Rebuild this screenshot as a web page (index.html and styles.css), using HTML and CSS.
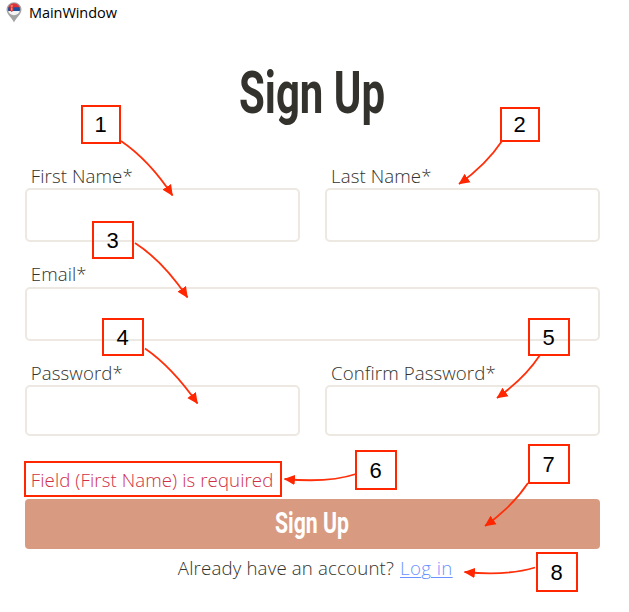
FILE: index.html
```html
<!DOCTYPE html>
<html lang="en">
<head>
<meta charset="utf-8">
<title>MainWindow</title>
<link rel="stylesheet" href="styles.css">
</head>
<body>
<header class="titlebar">
  <svg class="pin" width="16" height="21" viewBox="0 0 16 21">
    <defs><clipPath id="flag"><circle cx="8" cy="7.300" r="6"/></clipPath></defs>
    <path d="M8 20.500C6.500 16.500.5 12.500.5 7.600a7.500 7.300 0 0 1 15 0C15.500 12.500 9.500 16.500 8 20.500Z" fill="#a3a3a3"/>
    <g clip-path="url(#flag)">
      <path d="M0 0h16v6H0z" fill="#e0303a"/>
      <path d="M0 5.300h16v4H0z" fill="#1f4f9c"/>
      <path d="M0 9h16v5H0z" fill="#f4f4f4"/>
      <path d="M4 4.500h3.500v4L5.700 10 4 8.500z" fill="#cf2c35"/>
      <path d="M4.800 3.500h2v1h-2zM5.300 5.500h1v3h-1z" fill="#f0cf8a"/>
    </g>
  </svg>
  <span class="window-name">MainWindow</span>
</header>
<main class="form">
  <h1 class="heading">
    <svg width="150" height="80"><text class="title-text" x="2" y="51.500" textLength="146" lengthAdjust="spacingAndGlyphs">Sign Up</text></svg>
  </h1>
  <div class="row">
    <label class="field"><span>First Name*</span><input type="text"></label>
    <label class="field"><span>Last Name*</span><input type="text"></label>
  </div>
  <div class="row row-email">
    <label class="field"><span>Email*</span><input type="text"></label>
  </div>
  <div class="row row-short">
    <label class="field"><span>Password*</span><input type="password"></label>
    <label class="field"><span>Confirm Password*</span><input type="password"></label>
  </div>
  <p class="error">Field (First Name) is required</p>
  <button class="submit" type="button">
    <svg width="90" height="44"><text class="submit-text" x="8" y="29" textLength="74" lengthAdjust="spacingAndGlyphs">Sign Up</text></svg>
  </button>
  <p class="login">Already have an account? <a href="#">Log in</a></p>
</main>
<svg class="annotations" width="629" height="612" viewBox="0 0 629 612">
  <defs>
    <marker id="tip" viewBox="0 0 10 10" refX="9.500" refY="5" markerWidth="11" markerHeight="11" markerUnits="userSpaceOnUse" orient="auto"><path d="M0 0.300 10 5 0 9.700Z"/></marker>
  </defs>
  <g class="boxes">
    <rect x="82" y="106" width="38" height="37"/>
    <rect x="501" y="108" width="38" height="33"/>
    <rect x="93" y="222" width="40" height="36"/>
    <rect x="103" y="319" width="40" height="36"/>
    <rect x="529" y="319" width="40" height="36"/>
    <rect x="356" y="451" width="40" height="38"/>
    <rect x="529" y="445" width="40" height="38"/>
    <rect x="537" y="553" width="40" height="38"/>
    <rect x="25" y="462" width="256" height="34"/>
  </g>
  <g class="arrows">
    <path d="M121 141Q149 160 172.500 195.500"/>
    <path d="M502 141Q486 165 459 184"/>
    <path d="M135 243Q163 261 187.500 297.500"/>
    <path d="M145 348.500Q172 367 197.500 403.500"/>
    <path d="M540 355Q525 378 497 398"/>
    <path d="M356 474Q329 483 284.500 479"/>
    <path d="M528 483Q512 507 485 526"/>
    <path d="M535 567.500Q507 576 464.500 572"/>
  </g>
  <g class="digits">
    <text x="100.500" y="132">1</text>
    <text x="519.500" y="132">2</text>
    <text x="112.500" y="248">3</text>
    <text x="122.500" y="345">4</text>
    <text x="548.500" y="345">5</text>
    <text x="375.500" y="478">6</text>
    <text x="548.500" y="472">7</text>
    <text x="556.500" y="580">8</text>
  </g>
</svg>
</body>
</html>
```

FILE: styles.css
```css
* { box-sizing: border-box; }

body {
  margin: 0;
  height: 612px;
  overflow: hidden;
  position: relative;
  background: #fff;
  color: #33322c;
  font: 300 18.67px/25px "Open Sans", sans-serif;
  letter-spacing: 0.09px;
}

.titlebar {
  display: flex;
  align-items: flex-start;
  height: 28px;
  padding: 2px 0 0 6px;
  gap: 7px;
}

.pin { flex: none; }

.window-name {
  font: 400 14.5px/21px "Open Sans", sans-serif;
  letter-spacing: -0.06px;
  color: #000;
}

.form {
  display: flex;
  flex-direction: column;
  padding: 0 29px 0 24.5px;
}

.heading {
  display: flex;
  justify-content: center;
  height: 135px;
  margin: 0;
  padding-top: 33px;
  letter-spacing: 0;
}

.heading svg { overflow: visible; }

.title-text {
  font: 700 59px "Roboto", sans-serif;
  fill: #33322c;
}

.row {
  display: flex;
  gap: 25px;
  margin-bottom: 20px;
}

.field {
  display: flex;
  flex: 1;
  flex-direction: column;
}

.field span {
  height: 25px;
  padding-left: 6.3px;
}

.field input {
  width: 100%;
  height: 54px;
  border: 2px solid #ede8e2;
  border-radius: 5px;
  background: #fff;
}

.row-email { margin-bottom: 19px; }
.row-email span { line-height: 23px; }

.row-short { margin-bottom: 31px; }

.row-short .field input { height: 51px; }

.error {
  height: 32px;
  margin: 0;
  padding-left: 6.3px;
  color: #d02f46;
}

.submit {
  display: flex;
  justify-content: center;
  height: 50px;
  padding: 5px 0 0;
  border: 0;
  border-radius: 4px;
  background: #d89b82;
}

.submit svg { flex: none; overflow: visible; }

.submit-text {
  font: 700 29px "Roboto", sans-serif;
  fill: #fff;
  letter-spacing: 0;
}

.login {
  margin: 6px 0 0;
  padding-left: 6px;
  text-align: center;
  letter-spacing: 0.16px;
}

.login a {
  margin-left: 1px;
  color: #6b93ff;
  letter-spacing: 0.4px;
  text-decoration-thickness: 1px;
  text-underline-offset: 2px;
}

.annotations {
  position: absolute;
  inset: 0;
  pointer-events: none;
  letter-spacing: 0;
}

.boxes { fill: none; stroke: #ff2600; stroke-width: 2; }
.arrows { fill: none; stroke: #ff2f0a; stroke-width: 1.8; }
.arrows path { marker-end: url(#tip); }
#tip path { fill: #ff2600; stroke: none; }

.digits {
  font: 400 22px "Liberation Sans", sans-serif;
  fill: #000;
  text-anchor: middle;
}
```
